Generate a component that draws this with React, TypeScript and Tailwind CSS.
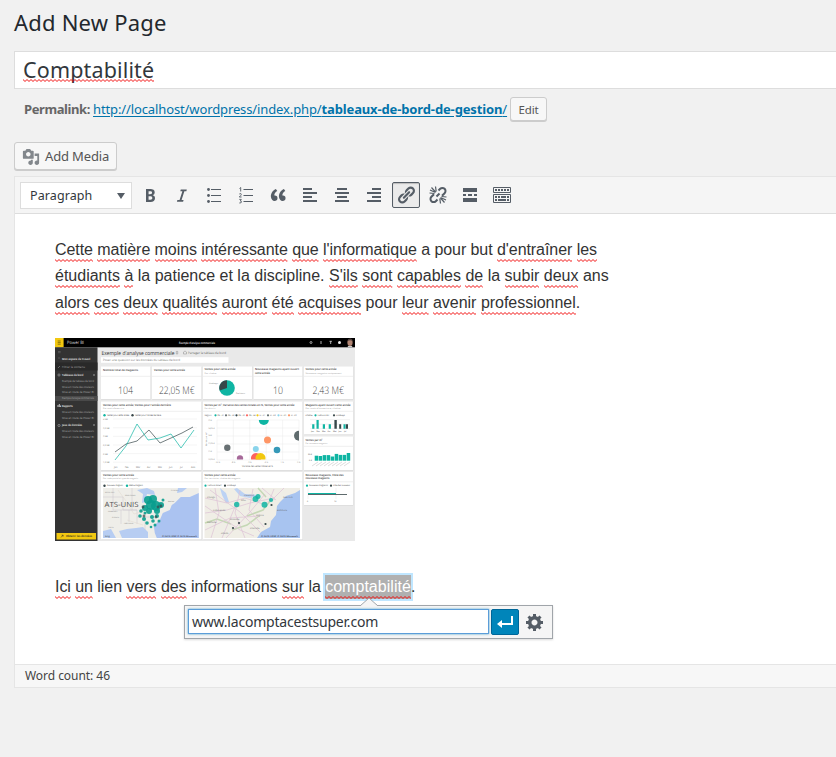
import React from "react";

const UI = "font-['Noto_Sans','Open_Sans',sans-serif]";

function Wave() {
  return (
    <svg className="absolute left-0 bottom-0 w-full h-[3px]" aria-hidden="true">
      <defs>
        <pattern id="wave" width="4" height="3" patternUnits="userSpaceOnUse">
          <path d="M-1 1.5L0 .5L2 2.5L4 .5L5 1.5" fill="none" stroke="#f00000" strokeWidth="0.95" />
        </pattern>
      </defs>
      <rect width="100%" height="3" fill="url(#wave)" />
    </svg>
  );
}

function Sp({ children }: { children: React.ReactNode }) {
  return (
    <span className="relative inline-block h-[21px] leading-[18px]">
      {children}
      <Wave />
    </span>
  );
}

/* Words wrapped in underscores are flagged by the spell checker. */
function Line({ text, className }: { text: string; className: string }) {
  return (
    <div className={"whitespace-nowrap leading-[26px] " + className}>
      {text.split("_").map((part, i) => (i % 2 ? <Sp key={i}>{part}</Sp> : <span key={i}>{part}</span>))}
    </div>
  );
}

const P = {
  bold: "M6 4v13h4.54c1.37 0 2.46-.33 3.26-1 .8-.66 1.2-1.58 1.2-2.77 0-.84-.17-1.51-.51-2.01s-.9-.85-1.67-1.03v-.09c.57-.1 1.02-.4 1.36-.9s.51-1.13.51-1.91c0-1.14-.39-1.98-1.17-2.5C12.75 4.26 11.5 4 9.78 4H6zm2.57 5.15V6.26h1.36c.73 0 1.27.11 1.61.32.34.22.51.58.51 1.07 0 .54-.16.92-.47 1.15s-.82.35-1.51.35h-1.5zm0 2.19h1.6c1.44 0 2.16.53 2.16 1.61 0 .6-.17 1.05-.51 1.34s-.86.43-1.57.43H8.57v-3.38z",
  italic: "M14.78 4.500h-6l-.5 1.700h2.100l-2.800 8.800h-2.200l-.5 1.700h6.200l.5-1.700h-2l2.800-8.800h2z",
  quote: "M9.49 13.22c0-.74-.2-1.38-.61-1.9-.62-.78-1.83-.88-2.53-.72-.29-1.65 1.11-3.75 2.92-4.65L7.88 4c-2.73 1.3-5.42 4.28-4.96 8.05C3.21 14.43 4.59 16 6.54 16c.85 0 1.56-.25 2.12-.75s.83-1.18.83-2.03zm8.05 0c0-.74-.2-1.38-.61-1.9-.63-.78-1.83-.88-2.53-.72-.29-1.65 1.11-3.75 2.92-4.65L15.93 4c-2.73 1.3-5.41 4.28-4.95 8.05.29 2.38 1.66 3.95 3.61 3.95.85 0 1.56-.25 2.12-.75s.83-1.18.83-2.03z",
  left: "M3 3h9v2H3zM3 7h14v2H3zM3 11h9v2H3zM3 15h14v2H3z",
  center: "M5 3h10v2H5zM3 7h14v2H3zM5 11h10v2H5zM3 15h14v2H3z",
  right: "M8 3h9v2H8zM3 7h14v2H3zM8 11h9v2H8zM3 15h14v2H3z",
  link: "M17.74 2.76c1.68 1.69 1.68 4.41 0 6.1l-1.53 1.52c-1.12 1.12-2.7 1.47-4.14 1.09l2.62-2.61.76-.77.76-.76c.84-.84.84-2.2 0-3.04-.84-.85-2.2-.85-3.04 0l-.77.76-3.38 3.38c-.37-1.44-.02-3.02 1.1-4.14l1.52-1.53c1.69-1.68 4.42-1.68 6.1 0zM8.59 13.43l5.34-5.34c.42-.42.42-1.1 0-1.52-.44-.43-1.13-.39-1.53 0l-5.33 5.34c-.42.42-.42 1.1 0 1.52.44.43 1.13.39 1.52 0zm-.76 2.29l4.14-4.15c.38 1.44.03 3.02-1.09 4.14l-1.52 1.53c-1.69 1.68-4.41 1.68-6.1 0-1.68-1.68-1.68-4.42 0-6.1l1.53-1.52c1.12-1.12 2.7-1.47 4.14-1.1l-4.14 4.15c-.85.84-.85 2.2 0 3.05.84.84 2.2.84 3.04 0z",
  more: "M3 3h14v4H3zM3 9h3v2H3zM8 9h4v2H8zM14 9h3v2h-3zM3 13h14v4H3z",
  media: "M13 11V4c0-.55-.45-1-1-1h-1.67L9 1H5L3.67 3H2c-.55 0-1 .45-1 1v7c0 .55.45 1 1 1h10c.55 0 1-.45 1-1zM7 4.5c1.38 0 2.5 1.12 2.5 2.5S8.38 9.5 7 9.5 4.5 8.38 4.5 7 5.62 4.5 7 4.5zM14 6h5v10.5c0 1.38-1.12 2.5-2.5 2.5S14 17.88 14 16.5s1.12-2.5 2.5-2.5c.17 0 .34.02.5.05V9h-3V6zm-4 8.05V13h2v3.5c0 1.38-1.12 2.5-2.5 2.5S7 17.88 7 16.5 8.12 14 9.5 14c.17 0 .34.02.5.05z",
  enter: "M16 4h2v9H7v3l-5-4 5-4v3h9V4z",
  gear: "M18 12h-2.18c-.17.7-.44 1.35-.81 1.93l1.54 1.54-2.1 2.1-1.54-1.54c-.58.36-1.23.63-1.91.79V19H8v-2.18c-.68-.16-1.33-.43-1.91-.79l-1.54 1.54-2.12-2.12 1.54-1.54c-.36-.58-.63-1.23-.79-1.91H1V9.03h2.17c.16-.7.44-1.35.8-1.94L2.43 5.55l2.1-2.1 1.54 1.54c.58-.37 1.24-.64 1.93-.81V2h3v2.18c.68.16 1.33.43 1.91.79l1.54-1.54 2.12 2.12-1.54 1.54c.36.59.64 1.24.8 1.94H18V12zm-8.5 1.5c1.66 0 3-1.34 3-3s-1.34-3-3-3-3 1.34-3 3 1.34 3 3 3z",
};

function Icon({ d, children, className = "size-5" }: { d?: string; children?: React.ReactNode; className?: string }) {
  return (
    <svg viewBox="0 0 20 20" className={className} fill="currentColor">
      {d && <path d={d} />}
      {children}
    </svg>
  );
}

function Tool({ children, active }: { children: React.ReactNode; active?: boolean }) {
  return (
    <button
      className={
        "flex h-[26px] w-7 items-center justify-center text-[#555d66] " +
        (active ? "rounded-[2px] border border-[#555d66] bg-[#ebebeb] shadow-[inset_0_1px_1px_rgba(0,0,0,0.2)]" : "")
      }
    >
      {children}
    </button>
  );
}

const teal = "#0fb5a3";
const dark = "#374649";

function T({ x, y, s = 2.8, c = "#333", b, children, w }: { x: number; y: number; s?: number; c?: string; b?: boolean; children: React.ReactNode; w?: number }) {
  return (
    <text x={x} y={y} fontSize={s} fill={c} fontWeight={b ? 600 : 400} textLength={w} lengthAdjust="spacingAndGlyphs">
      {children}
    </text>
  );
}

const cards = [
  [101, 366.5, 49.5, 32.5], [152, 366.5, 49.5, 32.5], [203, 366.5, 49, 32.5], [253.5, 366.5, 49, 32.5], [304, 366.5, 49, 32.5],
  [101, 401.5, 100.5, 68.5], [203, 401.5, 99.5, 68.5], [304, 401.5, 49, 33], [304, 436.5, 49, 33.5],
  [101, 472, 100.5, 67.5], [203, 472, 99.5, 67.5], [304, 472, 49, 33],
];

const side: [string, number, boolean][] = [
  ["Mon espace de travail", 359.8, true], ["Filtrer le contenu", 367.8, false], ["Tableaux de bord", 376, true],
  ["Exemple de tableau de bord", 382, false], ["Mise en route des couleurs", 387.6, false], ["Mise en route de Power BI", 393.4, false],
  ["Exemple d'analyse commerciale", 399.4, false], ["Rapports", 407.2, true], ["Mise en route des couleurs", 413.2, false],
  ["Mise en route de Power BI", 419, false], ["Jeux de données", 426.4, true], ["Mise en route des couleurs", 432.4, false], ["Mise en route de Power BI", 438.3, false],
];

const dots = [[148, 500, 4], [153, 499, 4], [151, 505, 5], [156, 506, 5], [161, 505, 3], [145, 508, 3], [149, 511, 3], [157, 511, 3], [141, 511, 1.8], [140, 516, 1.8], [144, 519, 2], [147, 523, 1.8], [152, 517, 2], [157, 516, 2], [153, 521, 1.8], [159, 521, 1.5], [155, 525, 1.5], [151, 527, 1.3], [145, 513, 1.5], [163, 500, 1.5]];

function Dashboard() {
  return (
    <svg viewBox="55 338 300 203" textRendering="geometricPrecision" className="block h-[203px] w-[300px] font-['Open_Sans','Noto_Sans',sans-serif]">
      <rect x="55" y="338" width="300" height="203" fill="#e9e9e9" />
      <rect x="55" y="338" width="300" height="9.3" fill="#000" />
      <rect x="55" y="338" width="8.6" height="9.3" fill="#f2c811" />
      <path d="M57.7 341h3M57.7 342.6h3M57.7 344.2h3" stroke="#7a6508" strokeWidth=".8" />
      <T x={67} y={344.3} s={4.4} c="#ddd" w={17}>Power BI</T>
      <T x={179} y={343.8} s={3} c="#eee" b w={36}>Exemple d'analyse commerciale</T>
      <circle cx="311" cy="342.5" r="1" fill="none" stroke="#ddd" strokeWidth=".7" />
      <path d="M321 341v3M329.5 341.3h2.4M330.7 341.3v2.7" stroke="#ddd" strokeWidth=".8" />
      <circle cx="339.5" cy="342.5" r="1.5" fill="#eee" />
      <ellipse cx="350" cy="342.5" rx="2.6" ry="3.5" fill="#b08472" /><path d="M347.600 341q.5-3 3-2.500 2 .3 2 2.500-2.500-1.500-5 0z" fill="#493b38" /><path d="M348 346l4 0 .5 1.300h-5z" fill="#ccc" />

      <rect x="55" y="347.3" width="42.5" height="194" fill="#333" />
      <rect x="55" y="362.5" width="42.5" height="8" fill="#292929" />
      <rect x="55" y="396" width="42.5" height="5" fill="#494949" />
      <path d="M58 351.5h2.6M58 352.7h2.6M58 358h2" stroke="#777" strokeWidth=".5" />
      {side.map(([t, y, b], i) => (
        <T key={i} x={62} y={y} s={2.9} b={b} c={b ? "#f3f3f3" : "#a5a5a5"} w={b ? t.length * 1.34 : Math.min(32, t.length * 1.28)}>{t}</T>
      ))}
      <circle cx="59" cy="375" r="1.1" fill="none" stroke="#bbb" strokeWidth=".5" />
      <path d="M58 407v-2M59.3 407v-3M60.6 407v-1.5" stroke="#eee" strokeWidth=".8" />
      <circle cx="59" cy="425.5" r="1.1" fill="none" stroke="#bbb" strokeWidth=".5" />
      <path d="M58 368l2-2M93 375h2M94 374v2M93 425h2M94 424v2" stroke="#aaa" strokeWidth=".5" />
      <rect x="56.5" y="533" width="39.5" height="6.5" fill="#f2c811" />
      <path d="M61 537.4l2-2.2M61.7 535.2h1.4v1.4" fill="none" stroke="#222" strokeWidth=".5" />
      <T x={66} y={537.3} s={2.9} b c="#222" w={26}>Obtenir les données</T>

      <T x={101.5} y={354.9} s={5.4} w={73}>Exemple d'analyse commerciale</T>
      <path d="M176.3 351.4v2.6h1.4v-2.6zM183.5 354h3v-2l-1.5-1-1.5 1z" fill="none" stroke="#777" strokeWidth=".4" />
      <T x={188} y={354} s={3.2} c="#666" w={38}>Partager le tableau de bord</T>
      <rect x="101" y="357.2" width="127.5" height="5.6" fill="#fff" />
      <T x={103} y={361} s={3} c="#777" w={77}>Poser une question sur les données du tableau de bord</T>

      {cards.map(([x, y, w, h], i) => (
        <g key={i}>
          <rect x={x + .2} y={y + .4} width={w} height={h} fill="#cfcfcf" />
          <rect x={x} y={y} width={w} height={h} fill="#fff" />
          <path d={`M${x} ${y + 9.8}h${w}`} stroke="#ddd" strokeWidth=".5" />
        </g>
      ))}
      <T x={103} y={370.5} b w={35}>Nombre total de magasins</T>
      <T x={154} y={370.5} b w={31}>Ventes pour cette année</T>
      <T x={204.5} y={370.2} b w={31}>Ventes pour cette année</T>
      <T x={204.5} y={373.5} s={2} c="#999" w={12}>Par chaîne</T>
      <T x={255} y={370.2} b w={44}>Nouveaux magasins ayant ouvert</T>
      <T x={255} y={373.6} b w={15}>cette année</T>
      <T x={305.5} y={370.2} b w={31}>Ventes pour cette année</T>
      <T x={305.5} y={373.5} s={2} c="#999" w={36}>Nouveaux magasins uniquement</T>
      <g fontWeight="300">
        <text x="118" y="393.8" fontSize="10.5" fill="#444" textLength="15" lengthAdjust="spacingAndGlyphs">104</text>
        <text x="159" y="393.8" fontSize="10.5" fill="#444" textLength="35.5" lengthAdjust="spacingAndGlyphs">22,05 M€</text>
        <text x="273" y="393.8" fontSize="10.5" fill="#444" textLength="10" lengthAdjust="spacingAndGlyphs">10</text>
        <text x="312.5" y="393.8" fontSize="10.5" fill="#444" textLength="31.5" lengthAdjust="spacingAndGlyphs">2,43 M€</text>
      </g>
      <circle cx="227" cy="388" r="7.8" fill={teal} />
      <path d="M227 388L219.7 390.5A7.8 7.8 0 0 1 227 380.2z" fill={dark} />
      <T x={209} y={383.5} s={2} c="#777" w={9}>Lindseys</T>
      <T x={236} y={393.8} s={2} c="#777" w={9}>Fashions</T>

      <T x={103} y={405.8} b w={68}>Ventes pour cette année, Ventes pour l'année dernière</T>
      <T x={103} y={408.8} s={2} c="#999" w={21}>Par mois d'exercice</T>
      <circle cx="104.5" cy="415.3" r="1.2" fill={teal} /><T x={107} y={416} s={2.3} w={22}>Ventes pour cette année</T>
      <circle cx="132.5" cy="415.3" r="1.2" fill={dark} /><T x={135} y={416} s={2.3} w={26}>Ventes pour l'année dernière</T>
      {[420, 428.8, 437.4, 446, 454.6, 463.2].map((y, i) => (
        <g key={y}><path d={`M113 ${y - 1}h84`} stroke="#e5e5e5" strokeWidth=".4" /><T x={103} y={y} s={2.1} c="#777">{["4 M€", "3,5 M€", "3 M€", "2,5 M€", "2 M€", "1,5 M€"][i]}</T></g>
      ))}
      {["Jan", "Fév", "Mar", "Avr", "Mai", "Jun", "Jul", "Aoû"].map((m, i) => <T key={m} x={114 + i * 11} y={467.5} s={2.3} c="#666">{m}</T>)}
      <path d="M115 452l11-8 11-3 12-11 11 13 11-5 11-5 11-6" fill="none" stroke={dark} strokeWidth=".7" />
      <path d="M115 460l11-14 11-22 11 16 12-2 11-4 10 14 13-18" fill="none" stroke={teal} strokeWidth=".7" />

      <T x={204.5} y={405.8} b w={90}>Ventes par m², Variance des ventes totales en %, Ventes pour cette année</T>
      <T x={204.5} y={408.8} s={2} c="#999" w={11}>Par district</T>
      <T x={204.5} y={416} s={2.2} c="#555">Région</T>
      {[teal, "#687073", "#374649", "#fd625e", "#f2c80f", "#5f6b6d", "#8ad4eb", "#fe9666"].map((c, i) => (
        <g key={i}><circle cx={215.5 + i * 10.5} cy="415.3" r="1.1" fill={c} /><T x={217.5 + i * 10.5} y={416} s={2}>{["FD - 01", "FD - 02", "FD - 03", "FD - 04", "LI - 01", "LI - 02", "LI - 03", "LI - 05"][i]}</T></g>
      ))}
      {[420, 428, 436, 444, 452, 460].map((y) => <path key={y} d={`M217 ${y}h82`} stroke="#e7e7e7" strokeWidth=".4" />)}
      {[217, 233.4, 249.8, 266.2, 282.6, 299].map((x, i) => (
        <g key={x}><path d={`M${x} 420v40`} stroke="#e7e7e7" strokeWidth=".4" /><T x={x - 2} y={462.8} s={2} c="#777">{["-10 %", "-8 %", "-5 %", "-2 %", "1 %", "3 %"][i]}</T></g>
      ))}
      {["15 €", "14,50 €", "14 €", "13,50 €", "13 €", "12,50 €"].map((v, i) => <T key={v} x={208} y={420.7 + i * 7.8} s={2} c="#777">{v}</T>)}
      <T x={242} y={467} s={2.3} c="#444" w={31}>Variance des ventes totales en %</T>
      <text x="207" y="446" fontSize="2.1" fill="#555" transform="rotate(-90 207 446)">Ventes par m²</text>
      <path d="M258.8 420h10a5 5 0 0 1-10 0z" fill={teal} />
      <path d="M299 430.7v10a5 5 0 1 1 0-10z" fill="#5f6b6d" />
      {[[267.5, 440, 3.5, "#fe9666"], [227.3, 447.8, 3.2, "#687073"], [255.8, 449, 3, "#8ad4eb"], [277, 450, 3.3, "#3599b8"]].map(([x, y, r, c]) => <circle key={String(x)} cx={x} cy={y} r={r} fill={String(c)} />)}
      <path d="M237 459.500a3.2 3.2 0 1 1 6 0z" fill="#a66999" /><path d="M251.200 459.500a5 5 0 1 1 9.600 0z" fill="#fd625e" /><path d="M255.700 459.500a5 5 0 1 1 9.600 0z" fill="#f2c80f" />

      <T x={305.5} y={406} b w={45}>Magasins ayant ouvert cette année</T>
      <T x={305.5} y={408.8} s={2} c="#999" w={35}>Par mois d'ouverture, chaîne</T>
      <T x={305.5} y={416} s={2.2}>Chaîne</T>
      <circle cx="315.5" cy="415.3" r="1.1" fill={teal} /><T x={317.5} y={416} s={2.2} w={12}>Fashions Dir.</T>
      <circle cx="334" cy="415.3" r="1.1" fill={dark} /><T x={336} y={416} s={2.2}>Lindseys</T>
      <path d="M310 428.7h40M310 424.2h40M310 419.7h40" stroke="#ddd" strokeWidth=".4" />
      <path d="M312.2 424.2h2.2v4.5h-2.2zM316.5 420h2.2v8.700h-2.200zM322.8 424.2h2.2v4.5h-2.2zM328.7 424.2h2.2v4.5h-2.2zM343.500 424.2h2v4.5h-2z" fill={teal} />
      <path d="M334.4 420h2.4v8.7h-2.4zM339.2 424.2h2v4.5h-2zM345.8 424.2h2.2v4.5h-2.2z" fill={dark} />
      {["Jan", "Fév", "Mar", "Avr", "Mai", "Jun", "Jul"].map((m, i) => <T key={m} x={311 + i * 5.5} y={432} s={2}>{m}</T>)}
      <T x={305.5} y={440.5} b w={17}>Ventes par m²</T><T x={305.5} y={443.5} s={2} c="#999" w={22}>Par nouveaux magasins</T>
      {[5, 4.7, 5.6, 5.6, 4.2, 6.8, 5.8, 5.8, 7.7].map((h, i) => <rect key={i} x={314.7 + i * 4} y={460.7 - h} width="3.5" height={h} fill={teal} />)}
      {[0, 1, 2, 3, 4, 5, 6, 7, 8].map((i) => <path key={i} d={`M${312 + i * 4} 466l6-4`} stroke="#aaa" strokeWidth=".6" strokeDasharray=".8 .4" />)}
      <T x={308} y={454.5} s={2}>20 €</T><T x={309} y={461.2} s={2}>0 €</T>

      <T x={103} y={475.9} b w={31}>Ventes pour cette année</T><T x={103} y={478.9} s={2} c="#999" w={35}>Par code postal et type de magasin</T>
      <circle cx="104.5" cy="485.7" r="1.2" fill={dark} /><T x={107} y={486.4} s={2.2} w={16}>Nouveau magasin</T>
      <circle cx="127" cy="485.7" r="1.2" fill={teal} /><T x={129} y={486.4} s={2.2} w={14}>Même magasin</T>
      <g>
        <rect x="103" y="488" width="95.8" height="50" fill="#efeee9" />
        <path d="M198.8 493l-9 4-9 0-6 6-3 2-2 5-7 3-3 7-6 6 1 7 2 5h42z" fill="#abc3f1" />
        <path d="M137 490l10-2 7 3 1 4-8-1-2 8-3 1 1-9zM178 488h9l-5 4-5 1zM103 531l8-2 5 9h-13zM119 531l8-2 9-1 7-1 5 5 0 6h-26z" fill="#b7cdf2" />
        <path d="M103 497h20v13h14v14M113 488v22h24M121 510v14M129 510v12M137 517h18M132 488v22M145 515v15" fill="none" stroke="#c9c4ce" strokeWidth=".5" />
        <path d="M106 505h22l6 9 10-3M118 490l8 11M127 520l16 5" fill="none" stroke="#dfd4c8" strokeWidth=".4" />
        {[["MONTANA", 105, 493], ["WISCONSIN", 125, 496], ["NEBRASKA", 108, 512], ["KANSAS", 112, 518], ["ARKANSAS", 124, 524], ["TEXAS", 108, 528], ["CANADA", 171, 490.5], ["Boston", 168, 502]].map(([t, x, y]) => <T key={t} x={+x} y={+y} s={1.9} c="#777">{t}</T>)}
        <T x={104.5} y={506.7} s={7.2} c="#555" w={34}>ATS-UNIS</T>
        {dots.map(([x, y, r], i) => <circle key={i} cx={x} cy={y} r={r} fill="#099d8e" fillOpacity=".9" />)}
        {[[143, 507], [158, 507], [144, 516], [156, 517], [161, 506]].map(([x, y]) => <circle key={x} cx={x} cy={y} r="1.4" fill={dark} fillOpacity=".7" />)}
        <T x={105} y={536.5} s={2.4}>bing</T><T x={162} y={536.5} s={2} b w={35}>© 2015 HERE © 2015 Microsoft</T>
      </g>

      <T x={204.5} y={475.9} b w={31}>Ventes pour cette année</T><T x={204.5} y={478.9} s={2} c="#999" w={36}>Par territoire, chaîne de magasin</T>
      <circle cx="205.5" cy="485.7" r="1.1" fill={teal} /><T x={207.5} y={486.4} s={2.2} w={14}>Fashions Direct</T>
      <circle cx="225" cy="485.7" r="1.1" fill={dark} /><T x={227} y={486.4} s={2.2}>Lindseys</T>
      <rect x="204.5" y="488" width="95.5" height="50" fill="#f0eee6" />
      <path d="M300 490l-5 3-9 3-6 6-3 4-1 9-5 6-1 6-9 5-4 6h43z" fill="#a8c4f0" />
      <path d="M220 488l6 5 3 9-3 1-4-8zM237 488l8 6 13 1-8 3-10-2-6-7z" fill="#bcd2f4" />
      <path d="M247 516l16-6 8-10M232 530l15-5 12-9M205 523l12-4 14 5M258 488l8 9" fill="none" stroke="#c5d8b5" strokeWidth="1.500" />
      <path d="M205 498l22 5 18-5 18 6 12-5M205 513l22-3 23-7 24-5M215 488l4 25-8 25M240 490l-5 23 10 25M205 530l25-12 30-2M226 538l24-26 15-18M253 489l-4 21 15 17M210 490l30 22 20 20M205 506l35 24 14 6M222 538l15-36M262 488l14 12M274 489l-4 10M284 488l-12 12" fill="none" stroke="#ddc1d6" strokeWidth=".7" />
      {[["Chicago", 207, 498], ["Indianapolis", 213, 511], ["Nashville", 207, 523], ["Ohio", 241, 501], ["Cleveland", 244, 496], ["New York", 283, 498], ["Baltimore", 277, 511], ["Virginia", 256, 516], ["Charlotte", 250, 529], ["Atlanta", 221, 534], ["Knoxville", 230, 520]].map(([t, x, y]) => <T key={t} x={+x} y={+y} s={2.2} c="#666">{t}</T>)}
      {[[236.7, 504.5, 2.7], [255.5, 499, 3], [258, 496.5, 2.5], [264.5, 504.8, 3], [271, 500, 2.1]].map(([x, y, r]) => <circle key={x} cx={x} cy={y} r={r} fill={teal} fillOpacity=".85" />)}
      {[[271.5, 505], [239, 523], [265.5, 524], [233, 528]].map(([x, y]) => <circle key={x} cx={x} cy={y} r="1.1" fill={dark} />)}
      <T x={261} y={536.5} s={2} b w={37}>© 2015 HERE © 2015 Microsoft</T>

      <T x={305.5} y={475.9} b w={38}>Nouveaux magasins, Cible des</T><T x={305.5} y={479.3} b w={24}>nouveaux magasins</T>
      <circle cx="307" cy="485.7" r="1.1" fill={teal} /><T x={309} y={486.4} s={2.2} w={19}>Nouveaux magasins</T>
      <circle cx="331" cy="485.7" r="1.1" fill={dark} /><T x={333} y={486.4} s={2.2} w={17}>Cible des nouveaux</T>
      <path d="M308 488v11M336 488v11" stroke="#ddd" strokeWidth=".4" />
      <rect x="308" y="493" width="28" height="1.2" fill={teal} /><rect x="308" y="494.2" width="39" height=".8" fill={dark} />
      <T x={307} y={501.5} s={2}>0</T><T x={334} y={501.5} s={2}>10</T>
    </svg>
  );
}

export default function App() {
  return (
    <div className={"h-[757px] w-[836px] overflow-hidden bg-[#f1f1f1] pl-[14px] text-[#444] " + UI}>
      <h1 className="h-[51px] whitespace-nowrap pt-[7px] text-[22px] leading-[30px] tracking-[0.2px] text-[#23282d]">Add New Page</h1>
      <div className="h-[38px] border border-r-0 border-[#ddd] bg-white pl-2 pt-[3px] text-[21.5px] leading-[30px] tracking-[0.15px] text-[#32373c]">
        <span className="relative inline-block h-[27px] leading-[30px]">
          Comptabilité
          <Wave />
        </span>
      </div>
      <div className="flex h-[53px] items-start whitespace-nowrap pl-[10px] pt-[8px] text-[13px] leading-[25px]">
        <strong className="mr-[3px] tracking-[-0.4px] text-[#666]">Permalink:</strong>
        <a className="tracking-[-0.12px] text-[#0073aa] underline underline-offset-2">
          http://localhost/wordpress/index.php/<b className="tracking-[-0.13px]">tableaux-de-bord-de-gestion</b>/
        </a>
        <button className="ml-[3px] h-[24px] w-[37px] rounded-[3px] border border-[#ccc] bg-[#f7f7f7] text-[11.5px] leading-[21px] tracking-[-0.1px] text-[#555] shadow-[0_1px_0_#ccc]">Edit</button>
      </div>
      <button className="flex h-[28px] w-[103px] items-center whitespace-nowrap rounded-[3px] border border-[#ccc] bg-[#f7f7f7] pl-[7px] text-[13px] tracking-[-0.15px] text-[#555] shadow-[0_1px_0_#ccc]">
        <Icon d={P.media} className="mr-[5px] mt-[2px] size-[18px] text-[#82878c]" />
        <span className="pt-[2px]">Add Media</span>
      </button>
      <div className="mt-[6px] h-[512px] border border-r-0 border-[#e5e5e5] bg-white">
        <div className="flex h-[37px] items-center gap-1 border-b border-[#ddd] bg-[#f5f5f5] pl-[5px]">
          <div className="flex h-[27px] w-[112px] items-center justify-between border border-[#ddd] bg-white pl-[9px] pr-[6px] text-[12.5px] tracking-[0.1px] text-[#32373c]">
            <span className="pt-[2px]">Paragraph</span>
            <svg viewBox="0 0 8 6" className="mt-[2px] h-[6px] w-2 fill-[#555d66]"><path d="M0 0h8L4 6z" /></svg>
          </div>
          <Tool><Icon d={P.bold} /></Tool>
          <Tool><Icon d={P.italic} /></Tool>
          <Tool><Icon><path d="M7 4h10v1H7zM7 10h10v1H7zM7 16h10v1H7z" /><circle cx="4.500" cy="4.500" r="1.400" /><circle cx="4.500" cy="10.500" r="1.400" /><circle cx="4.500" cy="16.500" r="1.400" /></Icon></Tool>
          <Tool><Icon><path d="M7.500 4h9.500v1H7.500zM7.500 10h9.500v1H7.500zM7.500 16h9.500v1H7.500z" /><path d="M3.500 3.500L4.700 2.500V6.500M3.300 9q2-1.200 2 .3 0 .8-2 2.700h2.300M3.300 14.400h2L4.300 16q1.300 0 1.300 1t-2.300 1" fill="none" stroke="currentColor" strokeWidth=".9" /></Icon></Tool>
          <Tool><Icon d={P.quote} /></Tool>
          <Tool><Icon d={P.left} /></Tool>
          <Tool><Icon d={P.center} /></Tool>
          <Tool><Icon d={P.right} /></Tool>
          <Tool active><Icon d={P.link} className="size-5 shrink-0" /></Tool>
          <Tool>
            <Icon>
              <path d="M10.500 5.500l1.700-1.700a3.100 3.100 0 0 1 4.400 4.400L14 10.800M9.500 14.500l-1.700 1.700a3.100 3.100 0 0 1-4.400-4.400L6 9.200" fill="none" stroke="currentColor" strokeWidth="2" />
              <path d="M8.500 11.500l3-3" fill="none" stroke="currentColor" strokeWidth="2" />
              <path d="M7.500 7.500L2 5M7.500 7L3.500 2.500M8.200 6.500L7.500 1.500M6.500 8.500L1.500 8M12.500 12.500L18 15M12.500 13L16.500 17.500M11.800 13.500L12.500 18.500M13.500 11.500L18.500 12" fill="none" stroke="currentColor" strokeWidth="1.200" />
            </Icon>
          </Tool>
          <Tool><Icon d={P.more} /></Tool>
          <Tool>
            <Icon>
              <path d="M1.500 2.500h17v5h-17zM1.500 9.500h17v8h-17z" fill="none" stroke="currentColor" />
              <path d="M3 5h14" stroke="currentColor" strokeWidth="2" strokeDasharray="2 1" />
              <path d="M3 12h14" stroke="currentColor" strokeWidth="2" strokeDasharray="2 1 2 1 5 1 2" />
              <path d="M3 15h14" stroke="currentColor" strokeWidth="2" strokeDasharray="2 1 8 1 2" />
            </Icon>
          </Tool>
        </div>
        <div className="relative h-[450px] pl-10 pt-[23px] font-['Liberation_Sans',Arial,sans-serif] text-[16px] text-[#333]">
          <Line className="h-[26px] tracking-[-0.065px]" text={"_Cette_ _matière_ _moins_ _intéressante_ _que_ _l'informatique_ a pour but _d'entraîner_ _les_"} />
          <Line className="h-[27px]" text={"_étudiants_ _à_ la patience et la discipline. _S'ils_ _sont_ _capables_ _de_ la _subir_ _deux_ ans"} />
          <Line className="h-[26.5px] tracking-[-0.02px]" text={"_alors_ _ces_ _deux_ _qualités_ _auront_ _été_ _acquises_ pour _leur_ _avenir_ _professionnel_."} />
          <div className="mt-[21.5px] h-[236px]"><Dashboard /></div>
          <div className="whitespace-nowrap leading-[26px] tracking-[-0.05px]">
            <Sp>Ici</Sp> <Sp>un</Sp> lien <Sp>vers</Sp> <Sp>des</Sp> informations <Sp>sur</Sp> la{" "}
            <span className="relative inline-block h-[21px] leading-[18px] tracking-[0.03px] text-white">
              <span className="absolute inset-x-0 -top-[3px] h-[24px] bg-[#b0b0b0] shadow-[0_0_0_2px_#bfe6ff]" />
              <span className="relative">comptabilité</span>
              <Wave />
            </span>
            <span className="relative">.</span>
          </div>
          <div className={"absolute left-[169px] top-[391px] flex h-[34px] w-[369px] items-center border border-[#a0a5aa] bg-[#f5f5f5] pl-[3px] shadow-[0_1px_2px_rgba(0,0,0,0.15)] " + UI}>
            <svg viewBox="0 0 18 9" className="absolute -top-[9px] left-[175px] h-[9px] w-[18px]"><path d="M0 9L9 1l9 8" fill="#f5f5f5" stroke="#a0a5aa" /></svg>
            <div className="h-[25px] w-[301px] -translate-y-px border border-[#5b9dd9] bg-white pl-[3px] text-[14px] leading-[23px] tracking-[-0.21px] text-[#32373c] shadow-[0_0_2px_rgba(30,140,190,0.8)]">www.lacomptacestsuper.com</div>
            <button className="ml-[2px] flex h-[26px] w-[28px] items-center justify-center rounded-[2px] border border-[#006799] bg-[#0085ba] text-white"><Icon d={P.enter} /></button>
            <button className="ml-[6px] text-[#555d66]"><Icon d={P.gear} /></button>
          </div>
        </div>
        <div className="h-[23px] border-t border-[#e5e5e5] bg-[#f7f7f7] pl-[10px] text-[12px] leading-[22px] tracking-[-0.05px]">Word count: 46</div>
      </div>
    </div>
  );
}
